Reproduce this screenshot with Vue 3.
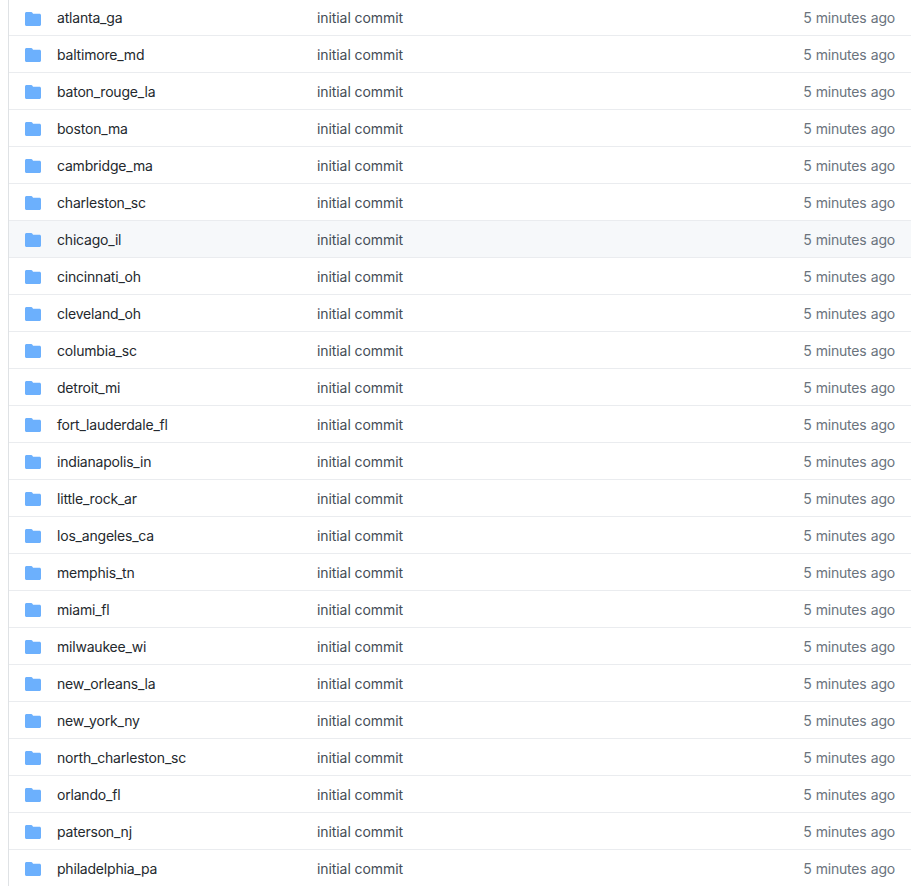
<template>
  <div class="files">
    <div v-for="name in folders" :key="name" class="row" :class="{ hover: name === 'chicago_il' }">
      <svg class="icon" viewBox="0 0 16 14" width="16" height="14" aria-hidden="true">
        <path d="M1.5 0h4.6c.7 0 1.2.3 1.5.9l.4.8h6.500c.8 0 1.500.7 1.500 1.500v9.300c0 .8-.7 1.500-1.500 1.500h-13C.7 14 0 13.300 0 12.500v-11C0 .7.7 0 1.500 0z" />
      </svg>
      <span class="name">{{ name }}</span>
      <span class="msg">initial commit</span>
      <span class="age">5 minutes ago</span>
    </div>
  </div>
</template>

<script setup>
const folders = [
  'atlanta_ga',
  'baltimore_md',
  'baton_rouge_la',
  'boston_ma',
  'cambridge_ma',
  'charleston_sc',
  'chicago_il',
  'cincinnati_oh',
  'cleveland_oh',
  'columbia_sc',
  'detroit_mi',
  'fort_lauderdale_fl',
  'indianapolis_in',
  'little_rock_ar',
  'los_angeles_ca',
  'memphis_tn',
  'miami_fl',
  'milwaukee_wi',
  'new_orleans_la',
  'new_york_ny',
  'north_charleston_sc',
  'orlando_fl',
  'paterson_nj',
  'philadelphia_pa',
]
</script>

<style>
html,
body {
  margin: 0;
  background: #fff;
  overflow: hidden;
}
</style>

<style scoped>
.files {
  height: 886px;
  overflow: hidden;
  margin-left: 8px;
  border-left: 1px solid #dfe2e5;
  font-family: Inter, 'Liberation Sans', sans-serif;
  font-size: 14px;
}

.row {
  display: flex;
  align-items: center;
  height: 36px;
  border-bottom: 1px solid #eaecef;
  padding-right: 16px;
  color: #24292e;
}

.row:first-child {
  height: 35px;
}

.hover {
  background: #f6f8fa;
}

.icon {
  margin: 2px 0 0 16px;
  fill: #6cb0fd;
  flex: none;
}

.name {
  margin-left: 16px;
  width: 260px;
  flex: none;
  letter-spacing: -0.2px;
}

.msg {
  flex: 1;
  color: #444d56;
  letter-spacing: -0.08px;
}

.age {
  color: #6a737d;
  letter-spacing: -0.2px;
  word-spacing: 0.5px;
}
</style>
